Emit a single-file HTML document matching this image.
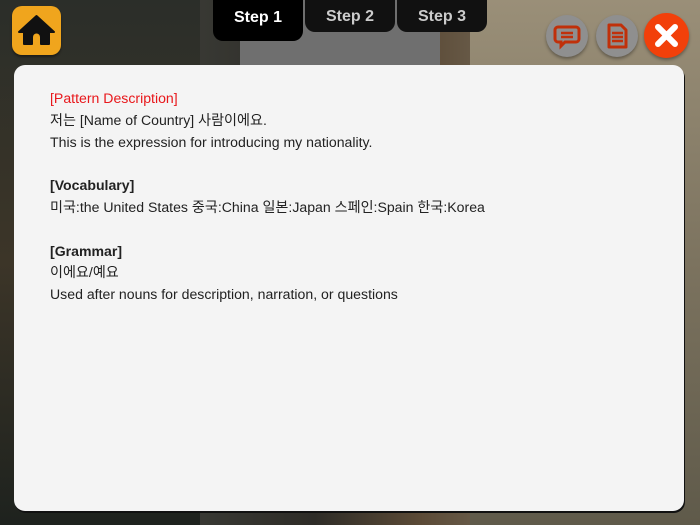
<!DOCTYPE html>
<html><head><meta charset="utf-8"><style>
*{margin:0;padding:0;box-sizing:border-box}
body{width:700px;height:525px;overflow:hidden;position:relative;font-family:"Liberation Sans","Noto Sans CJK KR",sans-serif;
background:linear-gradient(90deg,#2a2f28 0,#3a3b36 25%,#2e2c27 45%,#5b4a36 60%,#7a7262 80%,#8a8470 100%)}
.bgl{position:absolute;left:0;top:0;width:200px;height:525px;background:linear-gradient(180deg,#2b2e29,#3c3528 50%,#1e221e)}
.bgr{position:absolute;right:0;top:0;width:230px;height:525px;background:linear-gradient(180deg,#9a8f78,#7c735f 50%,#5f5a4a)}
.win{position:absolute;left:240px;top:0;width:200px;height:70px;background:#6f6f6f}
.home{position:absolute;left:12px;top:6px;width:49px;height:49px;background:#f0a51d;border-radius:10px;box-shadow:0 2px 2px rgba(0,0,0,.4)}
.tab{position:absolute;top:0;height:41px;background:#000;border-radius:0 0 10px 10px;color:#fff;font-weight:bold;font-size:16px;text-align:center;line-height:36px}
.tab.off{height:32px;color:#ccc;background:#111;line-height:34px}
.circ{position:absolute;width:42px;height:42px;border-radius:50%;background:#8f8f8f;box-shadow:0 2px 3px rgba(0,0,0,.35)}
.close{position:absolute;left:644px;top:13px;width:45px;height:45px;border-radius:50%;background:#f2400a;box-shadow:0 2px 3px rgba(0,0,0,.35)}
.panel{position:absolute;left:14px;top:65px;width:670px;height:446px;background:#f4f4f4;border-radius:11px;box-shadow:1px 2px 0 #111}
.txt{position:absolute;left:36px;top:23px;font-size:14.1px;line-height:21.8px;color:#222}
.red{color:#e8171b}
b{font-weight:bold}
</style></head><body>
<div class="bgl"></div><div class="win"></div><div class="bgr"></div>
<div class="home"><svg width="49" height="49" viewBox="0 0 49 49"><path d="M24.5 10 L7 26 h5 v12 h8 v-7 a4.5 4.5 0 0 1 9 0 v7 h8 v-12 h5 z" fill="#111" stroke="#111" stroke-width="2" stroke-linejoin="round"/></svg></div>
<div class="tab" style="left:213px;width:90px">Step 1</div>
<div class="tab off" style="left:305px;width:90px">Step 2</div>
<div class="tab off" style="left:397px;width:90px">Step 3</div>
<div class="circ" style="left:546px;top:15px"><svg width="42" height="42" viewBox="0 0 42 42"><path d="M12 12 h18 a3 3 0 0 1 3 3 v9 a3 3 0 0 1 -3 3 h-11 l-4 4 v-4 h-3 a3 3 0 0 1 -3 -3 v-9 a3 3 0 0 1 3 -3z" fill="none" stroke="#c0300a" stroke-width="3"/><path d="M15 18h12M15 22h12" stroke="#c0300a" stroke-width="2.5"/></svg></div>
<div class="circ" style="left:596px;top:15px"><svg width="42" height="42" viewBox="0 0 42 42"><path d="M13 10 h12 l5 5 v17 h-17z" fill="none" stroke="#c0300a" stroke-width="3" stroke-linejoin="round"/><path d="M16 18h11M16 22h11M16 26h11" stroke="#c0300a" stroke-width="2.5"/></svg></div>
<div class="close"><svg width="45" height="45" viewBox="0 0 45 45"><path d="M14 14 L31 31 M31 14 L14 31" stroke="#fff" stroke-width="6" stroke-linecap="round"/></svg></div>
<div class="panel"><div class="txt">
<div class="red">[Pattern Description]</div>
<div>저는 [Name of Country] 사람이에요.</div>
<div>This is the expression for introducing my nationality.</div>
<div>&nbsp;</div>
<div><b>[Vocabulary]</b></div>
<div>미국:the United States 중국:China 일본:Japan 스페인:Spain 한국:Korea</div>
<div>&nbsp;</div>
<div><b>[Grammar]</b></div>
<div>이에요/예요</div>
<div>Used after nouns for description, narration, or questions</div>
</div></div>
</body></html>
